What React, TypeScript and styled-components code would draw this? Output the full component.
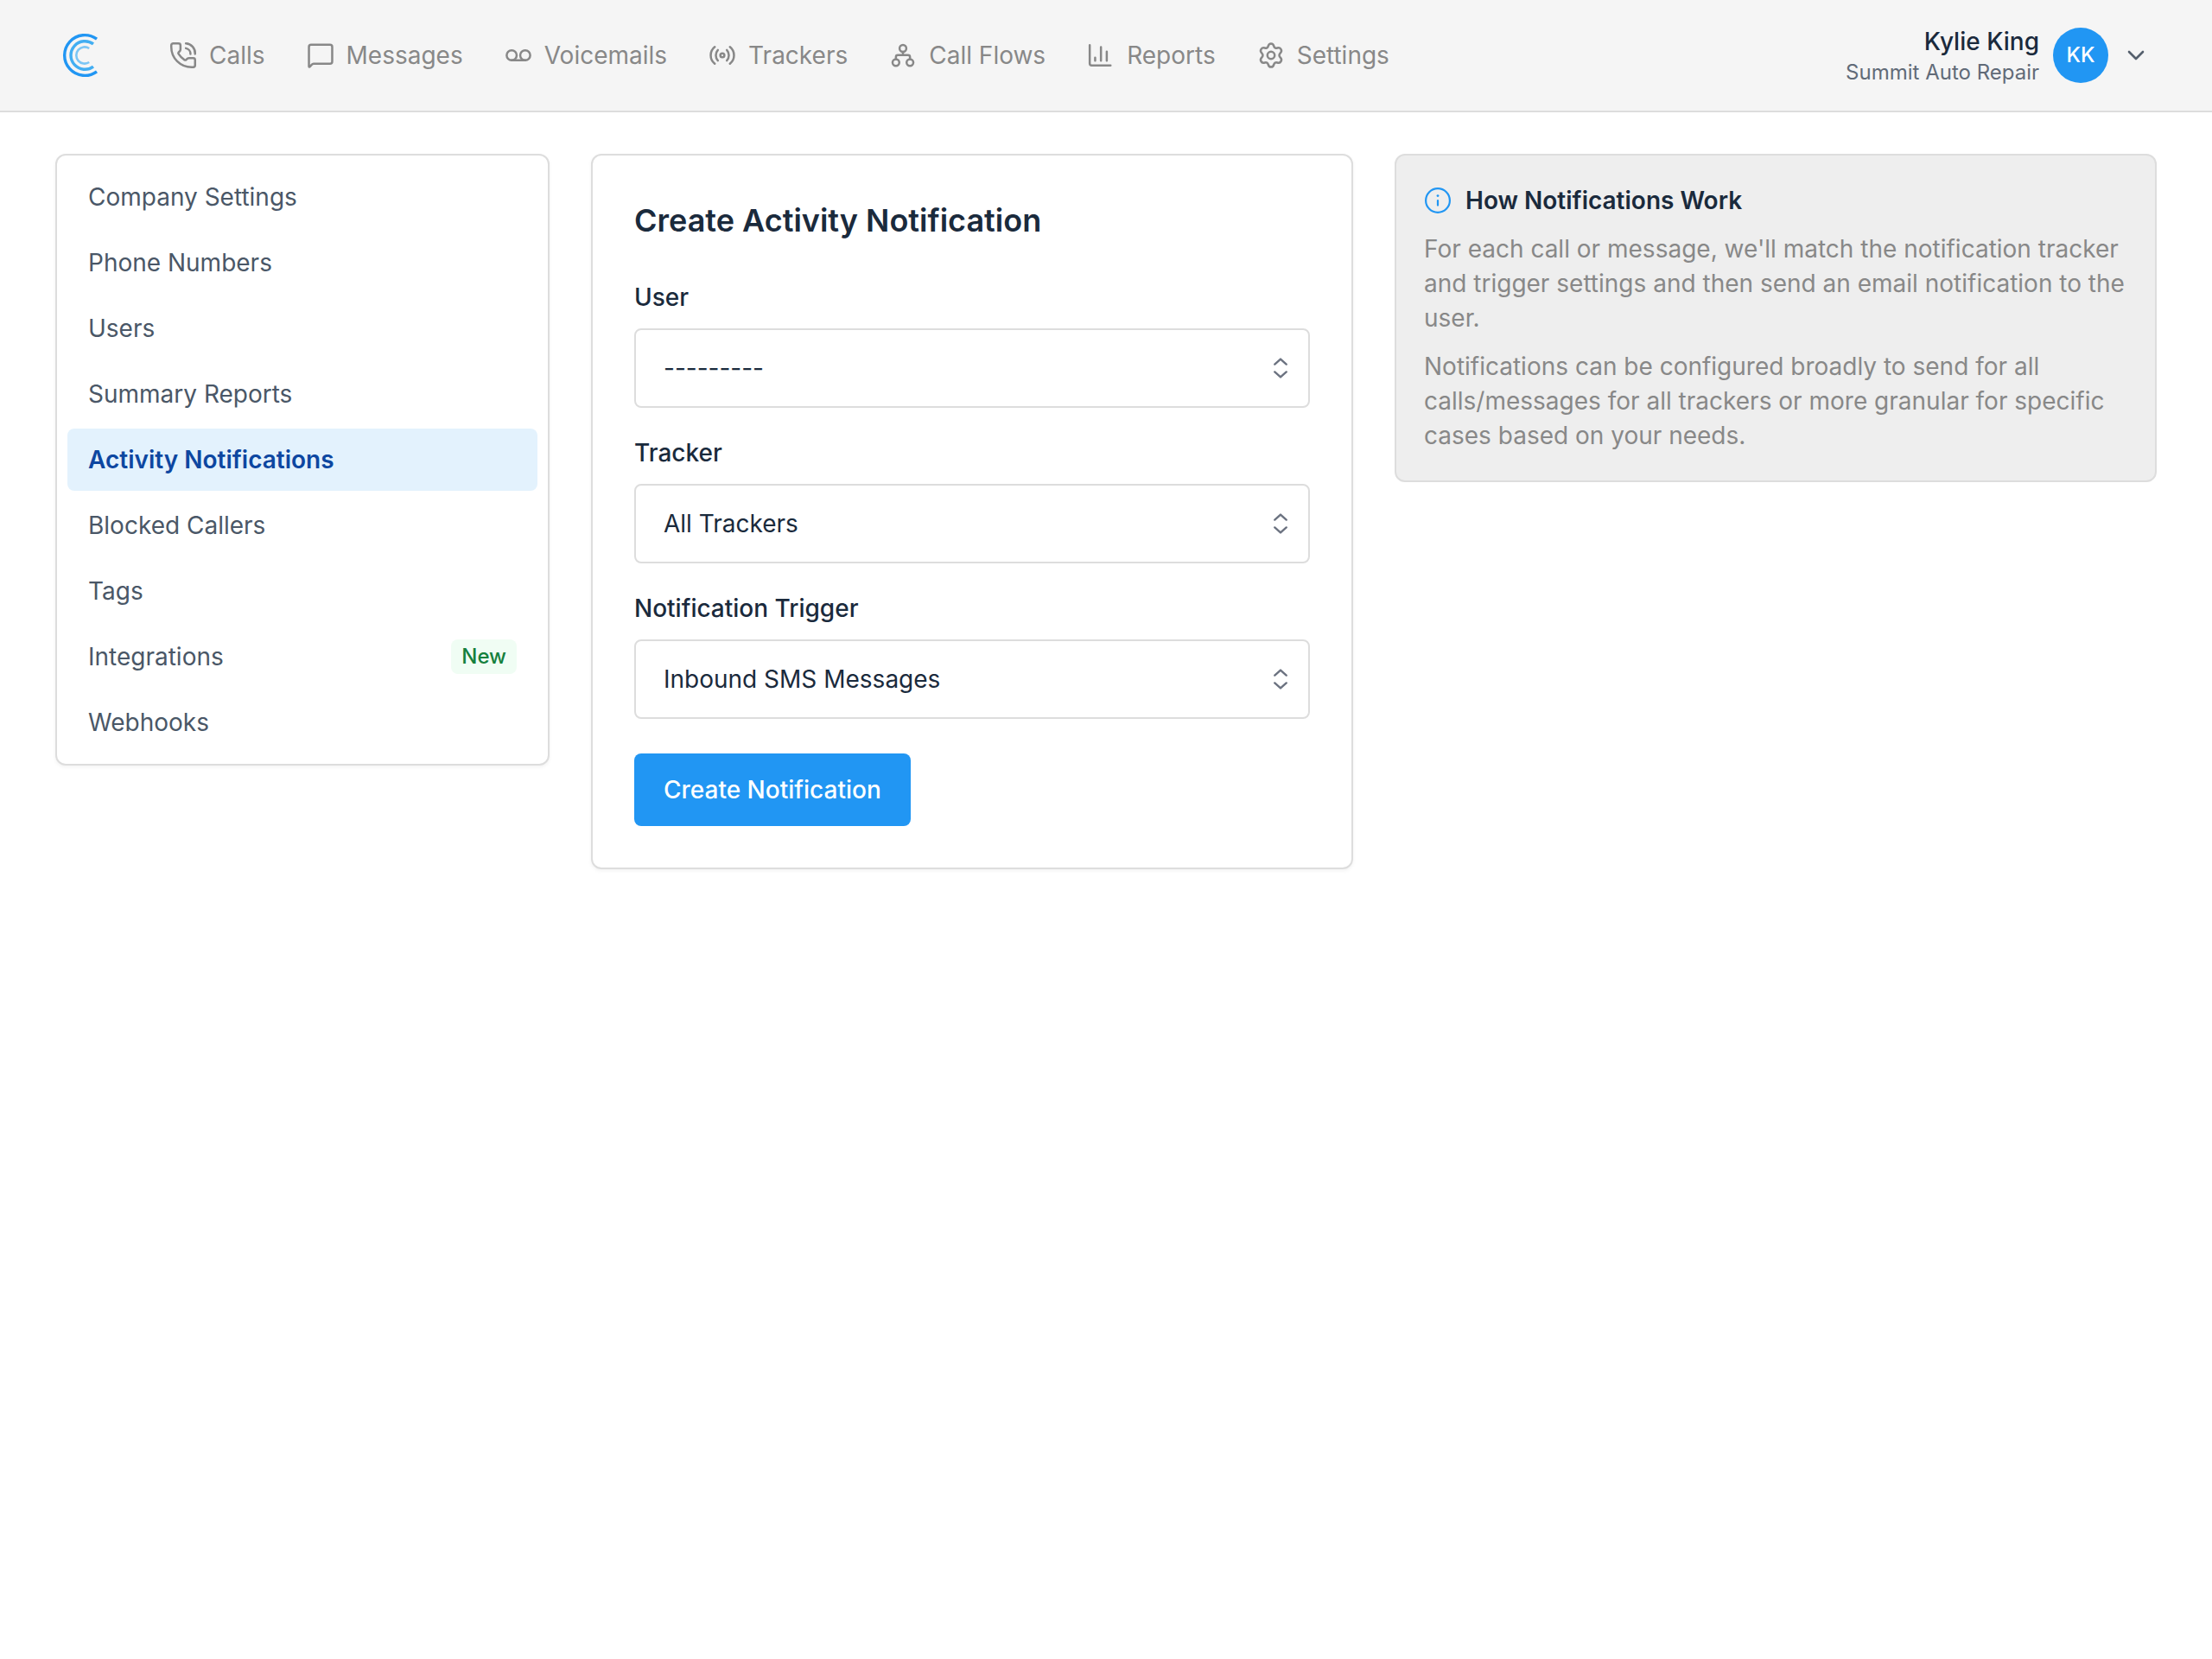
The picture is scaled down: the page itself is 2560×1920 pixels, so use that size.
import React from "react";
import styled, { createGlobalStyle } from "styled-components";

const color = {
  ink: "#1a2a3c",
  slate: "#4a5767",
  muted: "#888888",
  line: "#dddddd",
  blue: "#2196f3",
};

const GlobalStyle = createGlobalStyle`
  *, *::before, *::after { box-sizing: border-box; }
  body {
    margin: 0;
    background: #ffffff;
    color: ${color.ink};
    font-family: Inter, "Liberation Sans", sans-serif;
    font-size: 28px;
    line-height: 40px;
  }
`;

const Header = styled.header`
  display: flex;
  align-items: center;
  justify-content: space-between;
  height: 130px;
  padding: 0 72px;
  background: #f5f5f5;
  border-bottom: 2px solid ${color.line};
`;

const HeaderStart = styled.div`
  display: flex;
  align-items: center;
  gap: 72px;
`;

const HomeLink = styled.a`
  display: flex;
`;

const MainNav = styled.nav`
  display: flex;
  align-items: center;
  gap: 46px;
`;

const NavLink = styled.a`
  display: flex;
  align-items: center;
  gap: 12px;
  color: ${color.muted};
  text-decoration: none;
  white-space: nowrap;
`;

const AccountButton = styled.button`
  display: flex;
  align-items: center;
  gap: 16px;
  padding: 0;
  border: 0;
  background: none;
  color: ${color.ink};
  font: inherit;
  text-align: right;
  cursor: pointer;
`;

const AccountText = styled.span`
  display: flex;
  flex-direction: column;
`;

const AccountName = styled.span`
  font-weight: 500;
`;

const AccountCompany = styled.span`
  color: #616b78;
  font-size: 24px;
  line-height: 32px;
`;

const Avatar = styled.span`
  display: flex;
  align-items: center;
  justify-content: center;
  width: 64px;
  height: 64px;
  border-radius: 50%;
  background: ${color.blue};
  color: #ffffff;
  font-size: 24px;
  font-weight: 500;
`;

const Page = styled.div`
  display: grid;
  grid-template-columns: repeat(12, minmax(0, 1fr));
  align-items: start;
  gap: 48px;
  padding: 48px 64px;
`;

const Card = styled.section`
  border: 2px solid ${color.line};
  border-radius: 12px;
  background: #ffffff;
  box-shadow: 0 2px 4px rgba(0, 0, 0, 0.05);
`;

const Sidebar = styled(Card).attrs({ as: "nav" })`
  grid-column: span 3;
  display: flex;
  flex-direction: column;
  gap: 4px;
  padding: 12px;
`;

const SideLink = styled.a<{ $active?: boolean }>`
  display: flex;
  align-items: center;
  justify-content: space-between;
  padding: 16px 24px;
  border-radius: 8px;
  background: ${(p) => (p.$active ? "#e3f2fd" : "transparent")};
  color: ${(p) => (p.$active ? "#0d47a1" : color.slate)};
  font-weight: ${(p) => (p.$active ? 600 : 400)};
  text-decoration: none;
`;

const Badge = styled.span`
  padding: 0 12px;
  border-radius: 8px;
  background: #f0fdf4;
  color: #15803d;
  font-size: 24px;
  font-weight: 500;
`;

const Content = styled.main`
  grid-column: span 9;
  display: grid;
  grid-template-columns: repeat(2, minmax(0, 1fr));
  align-items: start;
  gap: 48px;
`;

const FormCard = styled(Card)`
  padding: 48px;
`;

const FormTitle = styled.h1`
  margin: 0 0 42px;
  font-size: 36px;
  font-weight: 600;
  line-height: 54px;
`;

const Form = styled.form`
  display: flex;
  flex-direction: column;
  align-items: flex-start;
  gap: 40px;
`;

const FieldList = styled.div`
  display: flex;
  flex-direction: column;
  gap: 32px;
  width: 100%;
`;

const Field = styled.div`
  display: flex;
  flex-direction: column;
  gap: 16px;
`;

const Label = styled.label`
  font-weight: 500;
`;

const SelectWrap = styled.div`
  display: grid;
  align-items: center;

  & > * {
    grid-area: 1 / 1;
  }

  svg {
    justify-self: end;
    margin-right: 22px;
    pointer-events: none;
  }
`;

const Select = styled.select`
  appearance: none;
  width: 100%;
  height: 92px;
  padding: 0 72px 0 32px;
  border: 2px solid ${color.line};
  border-radius: 8px;
  background: #ffffff;
  color: ${color.ink};
  font: inherit;
`;

const SubmitButton = styled.button`
  height: 84px;
  padding: 0 34px;
  border: 0;
  border-radius: 8px;
  background: ${color.blue};
  color: #ffffff;
  font: inherit;
  font-weight: 500;
  cursor: pointer;
`;

const InfoCard = styled.aside`
  display: flex;
  flex-direction: column;
  gap: 16px;
  padding: 32px;
  border: 2px solid ${color.line};
  border-radius: 12px;
  background: #eeeeee;
`;

const InfoTitle = styled.h2`
  display: flex;
  align-items: center;
  gap: 16px;
  margin: 0;
  font-size: 28px;
  font-weight: 600;
`;

const InfoText = styled.p`
  margin: 0;
  color: ${color.muted};
`;

const Icon = ({ children }: { children: React.ReactNode }) => (
  <svg
    width="36"
    height="36"
    viewBox="0.5 0.5 23 23"
    fill="none"
    stroke="currentColor"
    strokeWidth="1.6"
    strokeLinecap="round"
    strokeLinejoin="round"
    aria-hidden="true"
  >
    {children}
  </svg>
);

const Logo = () => (
  <svg width="50" height="52" viewBox="0 0 50 52" fill="none" strokeWidth="3.4" aria-hidden="true">
    <path d="M40 7.2 A23.4 23.4 0 1 0 40 44.8" stroke="#2196f3" />
    <path d="M36 12.9 A16.3 16.3 0 1 0 36 39.1" stroke="#42aef2" />
    <path d="M31.2 18 A9.6 9.6 0 1 0 31.2 34" stroke="#7cc6f5" strokeWidth="2.6" />
  </svg>
);

const navItems: { label: string; icon: React.ReactNode }[] = [
  {
    label: "Calls",
    icon: (
      <>
        <path d="M14 3.2A7.2 7.2 0 0 1 20.8 11M14 6.8A4.2 4.2 0 0 1 17.4 11" />
        <path d="M18.2 20.8C9.8 20.8 3.2 14.2 3.2 5.8V4.6C3.2 3.8 3.8 3.2 4.6 3.2H8.4C9.4 3.2 10 3.8 10 4.6V7.6C10 8.1 9.9 8.5 9.6 8.8L8.6 9.8C8.3 10.2 8.3 10.6 8.6 11C9.7 12.8 11.2 14.3 13 15.4C13.4 15.6 13.8 15.6 14.2 15.3L15.2 14.4C15.5 14.1 15.9 14 16.4 14H19.4C20.2 14 20.8 14.6 20.8 15.4V19.4C20.8 20.2 20.2 20.8 19.4 20.8Z" />
      </>
    ),
  },
  {
    label: "Messages",
    icon: (
      <path d="M3.4 20.3V5.8A1.6 1.6 0 0 1 5 4.2H19A1.6 1.6 0 0 1 20.6 5.8V16.6A1.6 1.6 0 0 1 19 18.2H6.8A1.6 1.6 0 0 0 5.6 18.8L4 20.5C3.8 20.8 3.4 20.6 3.4 20.3Z" />
    ),
  },
  {
    label: "Voicemails",
    icon: (
      <>
        <circle cx="7" cy="12" r="3.7" />
        <circle cx="17" cy="12" r="3.7" />
        <path d="M7 15.7H17" />
      </>
    ),
  },
  {
    label: "Trackers",
    icon: (
      <>
        <circle cx="12" cy="12" r="1.5" />
        <path d="M15.3 8.1A5.8 5.8 0 0 1 15.3 15.9M8.7 8.1A5.8 5.8 0 0 0 8.7 15.9M17.6 5.8A7.9 7.9 0 0 1 17.6 18.2M6.4 5.8A7.9 7.9 0 0 0 6.4 18.2" />
      </>
    ),
  },
  {
    label: "Call Flows",
    icon: (
      <>
        <circle cx="12" cy="6.9" r="2.5" />
        <circle cx="6.8" cy="17.3" r="2.5" />
        <circle cx="17.2" cy="17.3" r="2.5" />
        <path d="M12 9.4V11.8M6.8 14.8V13.2C6.8 12.4 7.4 11.8 8.2 11.8H15.8C16.6 11.8 17.2 12.4 17.2 13.2V14.8" />
      </>
    ),
  },
  {
    label: "Reports",
    icon: <path d="M3.8 4.5V18.1A1.4 1.4 0 0 0 5.2 19.5H19.2M7.8 13.8V16M12.1 5.9V16M16.4 9.3V16" />,
  },
  {
    label: "Settings",
    icon: (
      <>
        <circle cx="12" cy="12" r="2.7" />
        <path d="M12 3.3C13.3 3.3 13.8 4 14.1 5.2C14.4 6.4 15.4 7 16.6 6.6C18 6.1 18.8 6.4 19.4 7.6C20 8.7 19.8 9.4 18.9 10.3C17.8 11.4 17.8 12.6 18.9 13.7C19.8 14.6 20 15.3 19.4 16.4C18.8 17.6 18 17.9 16.6 17.4C15.4 17 14.4 17.6 14.1 18.8C13.8 20 13.3 20.7 12 20.7C10.7 20.7 10.2 20 9.9 18.8C9.6 17.6 8.6 17 7.4 17.4C6 17.9 5.2 17.6 4.6 16.4C4 15.3 4.2 14.6 5.1 13.7C6.2 12.6 6.2 11.4 5.1 10.3C4.2 9.4 4 8.7 4.6 7.6C5.2 6.4 6 6.1 7.4 6.6C8.6 7 9.6 6.4 9.9 5.2C10.2 4 10.7 3.3 12 3.3Z" />
      </>
    ),
  },
];

const sideItems: { label: string; active?: boolean; badge?: string }[] = [
  { label: "Company Settings" },
  { label: "Phone Numbers" },
  { label: "Users" },
  { label: "Summary Reports" },
  { label: "Activity Notifications", active: true },
  { label: "Blocked Callers" },
  { label: "Tags" },
  { label: "Integrations", badge: "New" },
  { label: "Webhooks" },
];

const fields = [
  { id: "user", label: "User", value: "---------" },
  { id: "tracker", label: "Tracker", value: "All Trackers" },
  { id: "trigger", label: "Notification Trigger", value: "Inbound SMS Messages" },
];

export default function App() {
  return (
    <>
      <GlobalStyle />
      <Header>
        <HeaderStart>
          <HomeLink href="#" aria-label="Home">
            <Logo />
          </HomeLink>
          <MainNav>
            {navItems.map((item) => (
              <NavLink key={item.label} href="#">
                <Icon>{item.icon}</Icon>
                {item.label}
              </NavLink>
            ))}
          </MainNav>
        </HeaderStart>
        <AccountButton type="button">
          <AccountText>
            <AccountName>Kylie King</AccountName>
            <AccountCompany>Summit Auto Repair</AccountCompany>
          </AccountText>
          <Avatar>KK</Avatar>
          <svg width="32" height="32" viewBox="0 0 32 32" fill="none" stroke="#55606d" strokeWidth="2.6" strokeLinecap="round" strokeLinejoin="round" aria-hidden="true">
            <path d="M8 12L16 20L24 12" />
          </svg>
        </AccountButton>
      </Header>
      <Page>
        <Sidebar>
          {sideItems.map((item) => (
            <SideLink key={item.label} href="#" $active={item.active}>
              {item.label}
              {item.badge && <Badge>{item.badge}</Badge>}
            </SideLink>
          ))}
        </Sidebar>
        <Content>
          <FormCard>
            <FormTitle>Create Activity Notification</FormTitle>
            <Form onSubmit={(e) => e.preventDefault()}>
              <FieldList>
                {fields.map((field) => (
                  <Field key={field.id}>
                    <Label htmlFor={field.id}>{field.label}</Label>
                    <SelectWrap>
                      <Select id={field.id}>
                        <option>{field.value}</option>
                      </Select>
                      <svg width="24" height="24" viewBox="0 0 24 24" fill="none" stroke="#6b7280" strokeWidth="2.4" strokeLinecap="round" strokeLinejoin="round" aria-hidden="true">
                        <path d="M5.3 7.6L12 1.6L18.7 7.6M5.3 16.4L12 22.4L18.7 16.4" />
                      </svg>
                    </SelectWrap>
                  </Field>
                ))}
              </FieldList>
              <SubmitButton type="submit">Create Notification</SubmitButton>
            </Form>
          </FormCard>
          <InfoCard>
            <InfoTitle>
              <svg width="32" height="32" viewBox="0 0 32 32" fill="none" stroke={color.blue} strokeWidth="2.2" strokeLinecap="round" aria-hidden="true">
                <circle cx="16" cy="16" r="13.9" />
                <path d="M16 16V21.6" />
                <circle cx="16" cy="10.6" r="1.4" fill={color.blue} stroke="none" />
              </svg>
              How Notifications Work
            </InfoTitle>
            <InfoText>
              For each call or message, we'll match the notification tracker and trigger settings and
              then send an email notification to the user.
            </InfoText>
            <InfoText>
              Notifications can be configured broadly to send for all calls/messages for all trackers
              or more granular for specific cases based on your needs.
            </InfoText>
          </InfoCard>
        </Content>
      </Page>
    </>
  );
}
